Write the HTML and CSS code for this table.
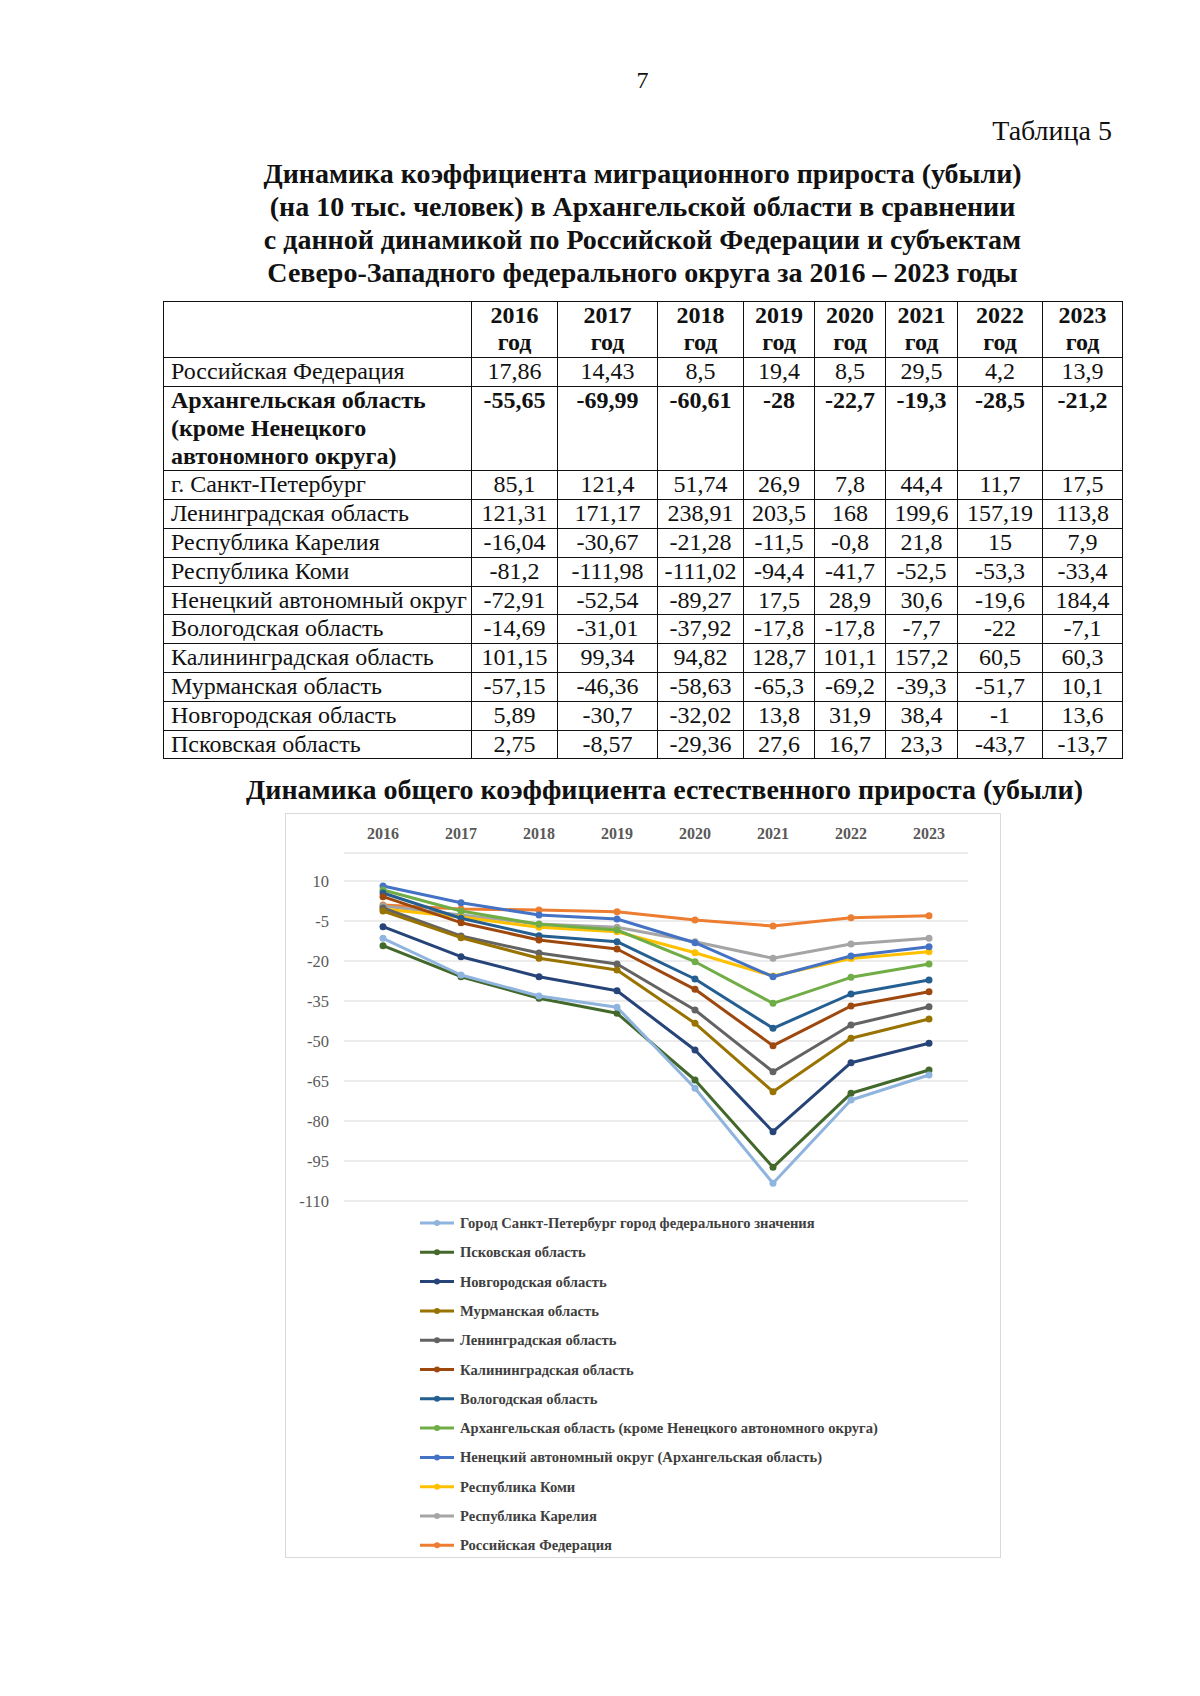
FILE: index.html
```html
<!DOCTYPE html>
<html>
<head>
<meta charset="UTF-8">
<title>Таблица 5</title>
<link rel="stylesheet" href="styles.css">
</head>
<body>
<div class="page">
	<div class="page_num">7</div>
	<div class="table_num">Таблица 5</div>
	<h1 class="title">
		Динамика коэффициента миграционного прироста (убыли)<br/>
		(на 10 тыс. человек) в Архангельской области в сравнении<br/>
		с данной динамикой по Российской Федерации и субъектам<br/>
		Северо-Западного федерального округа за 2016 – 2023 годы
	</h1>

	<table class="data">
		<colgroup>
			<col style="width:308px"><col style="width:86px"><col style="width:100px"><col style="width:86px"><col style="width:71px"><col style="width:71px"><col style="width:72px"><col style="width:85px"><col style="width:80px">
		</colgroup>
		<tr class="head">
			<td></td>
			<td>2016<br/>год</td><td>2017<br/>год</td><td>2018<br/>год</td><td>2019<br/>год</td><td>2020<br/>год</td><td>2021<br/>год</td><td>2022<br/>год</td><td>2023<br/>год</td>
		</tr>
		<tr><td class="name">Российская Федерация</td><td>17,86</td><td>14,43</td><td>8,5</td><td>19,4</td><td>8,5</td><td>29,5</td><td>4,2</td><td>13,9</td></tr>
		<tr class="bold"><td class="name">Архангельская область<br/>(кроме Ненецкого<br/>автономного округа)</td><td>-55,65</td><td>-69,99</td><td>-60,61</td><td>-28</td><td>-22,7</td><td>-19,3</td><td>-28,5</td><td>-21,2</td></tr>
		<tr><td class="name">г. Санкт-Петербург</td><td>85,1</td><td>121,4</td><td>51,74</td><td>26,9</td><td>7,8</td><td>44,4</td><td>11,7</td><td>17,5</td></tr>
		<tr><td class="name">Ленинградская область</td><td>121,31</td><td>171,17</td><td>238,91</td><td>203,5</td><td>168</td><td>199,6</td><td>157,19</td><td>113,8</td></tr>
		<tr><td class="name">Республика Карелия</td><td>-16,04</td><td>-30,67</td><td>-21,28</td><td>-11,5</td><td>-0,8</td><td>21,8</td><td>15</td><td>7,9</td></tr>
		<tr><td class="name">Республика Коми</td><td>-81,2</td><td>-111,98</td><td>-111,02</td><td>-94,4</td><td>-41,7</td><td>-52,5</td><td>-53,3</td><td>-33,4</td></tr>
		<tr><td class="name">Ненецкий автономный округ</td><td>-72,91</td><td>-52,54</td><td>-89,27</td><td>17,5</td><td>28,9</td><td>30,6</td><td>-19,6</td><td>184,4</td></tr>
		<tr><td class="name">Вологодская область</td><td>-14,69</td><td>-31,01</td><td>-37,92</td><td>-17,8</td><td>-17,8</td><td>-7,7</td><td>-22</td><td>-7,1</td></tr>
		<tr><td class="name">Калининградская область</td><td>101,15</td><td>99,34</td><td>94,82</td><td>128,7</td><td>101,1</td><td>157,2</td><td>60,5</td><td>60,3</td></tr>
		<tr><td class="name">Мурманская область</td><td>-57,15</td><td>-46,36</td><td>-58,63</td><td>-65,3</td><td>-69,2</td><td>-39,3</td><td>-51,7</td><td>10,1</td></tr>
		<tr><td class="name">Новгородская область</td><td>5,89</td><td>-30,7</td><td>-32,02</td><td>13,8</td><td>31,9</td><td>38,4</td><td>-1</td><td>13,6</td></tr>
		<tr><td class="name">Псковская область</td><td>2,75</td><td>-8,57</td><td>-29,36</td><td>27,6</td><td>16,7</td><td>23,3</td><td>-43,7</td><td>-13,7</td></tr>
	</table>

	<h2 class="chart_title">Динамика общего коэффициента естественного прироста (убыли)</h2>

	<div class="chart">
		<svg width="712" height="741" viewBox="286 814 712 741">
			<defs>
				<marker id="m_rf" viewBox="0 0 8 8" refX="4" refY="4" markerWidth="8" markerHeight="8" markerUnits="userSpaceOnUse"><circle cx="4" cy="4" r="3.5" fill="#ed7d31"/></marker>
				<marker id="m_kar" viewBox="0 0 8 8" refX="4" refY="4" markerWidth="8" markerHeight="8" markerUnits="userSpaceOnUse"><circle cx="4" cy="4" r="3.5" fill="#a5a5a5"/></marker>
				<marker id="m_komi" viewBox="0 0 8 8" refX="4" refY="4" markerWidth="8" markerHeight="8" markerUnits="userSpaceOnUse"><circle cx="4" cy="4" r="3.5" fill="#ffc000"/></marker>
				<marker id="m_nen" viewBox="0 0 8 8" refX="4" refY="4" markerWidth="8" markerHeight="8" markerUnits="userSpaceOnUse"><circle cx="4" cy="4" r="3.5" fill="#4472c4"/></marker>
				<marker id="m_arh" viewBox="0 0 8 8" refX="4" refY="4" markerWidth="8" markerHeight="8" markerUnits="userSpaceOnUse"><circle cx="4" cy="4" r="3.5" fill="#70ad47"/></marker>
				<marker id="m_vol" viewBox="0 0 8 8" refX="4" refY="4" markerWidth="8" markerHeight="8" markerUnits="userSpaceOnUse"><circle cx="4" cy="4" r="3.5" fill="#255e91"/></marker>
				<marker id="m_kal" viewBox="0 0 8 8" refX="4" refY="4" markerWidth="8" markerHeight="8" markerUnits="userSpaceOnUse"><circle cx="4" cy="4" r="3.5" fill="#9e480e"/></marker>
				<marker id="m_len" viewBox="0 0 8 8" refX="4" refY="4" markerWidth="8" markerHeight="8" markerUnits="userSpaceOnUse"><circle cx="4" cy="4" r="3.5" fill="#636363"/></marker>
				<marker id="m_mur" viewBox="0 0 8 8" refX="4" refY="4" markerWidth="8" markerHeight="8" markerUnits="userSpaceOnUse"><circle cx="4" cy="4" r="3.5" fill="#997300"/></marker>
				<marker id="m_nov" viewBox="0 0 8 8" refX="4" refY="4" markerWidth="8" markerHeight="8" markerUnits="userSpaceOnUse"><circle cx="4" cy="4" r="3.5" fill="#264478"/></marker>
				<marker id="m_psk" viewBox="0 0 8 8" refX="4" refY="4" markerWidth="8" markerHeight="8" markerUnits="userSpaceOnUse"><circle cx="4" cy="4" r="3.5" fill="#43682b"/></marker>
				<marker id="m_spb" viewBox="0 0 8 8" refX="4" refY="4" markerWidth="8" markerHeight="8" markerUnits="userSpaceOnUse"><circle cx="4" cy="4" r="3.5" fill="#8fb4de"/></marker>
			</defs>

			<!-- years on top -->
			<g class="years">
				<text x="383" y="839">2016</text>
				<text x="461" y="839">2017</text>
				<text x="539" y="839">2018</text>
				<text x="617" y="839">2019</text>
				<text x="695" y="839">2020</text>
				<text x="773" y="839">2021</text>
				<text x="851" y="839">2022</text>
				<text x="929" y="839">2023</text>
			</g>

			<g class="grid">
				<line x1="344" y1="853" x2="968" y2="853"/>
				<line x1="344" y1="881" x2="968" y2="881"/>
				<line x1="344" y1="921" x2="968" y2="921"/>
				<line x1="344" y1="961" x2="968" y2="961"/>
				<line x1="344" y1="1001" x2="968" y2="1001"/>
				<line x1="344" y1="1041" x2="968" y2="1041"/>
				<line x1="344" y1="1081" x2="968" y2="1081"/>
				<line x1="344" y1="1121" x2="968" y2="1121"/>
				<line x1="344" y1="1161" x2="968" y2="1161"/>
				<line x1="344" y1="1201" x2="968" y2="1201"/>
			</g>

			<g class="axis">
				<text x="329" y="887">10</text>
				<text x="329" y="927">-5</text>
				<text x="329" y="967">-20</text>
				<text x="329" y="1007">-35</text>
				<text x="329" y="1047">-50</text>
				<text x="329" y="1087">-65</text>
				<text x="329" y="1127">-80</text>
				<text x="329" y="1167">-95</text>
				<text x="329" y="1207">-110</text>
			</g>

			<g class="series">
				<polyline class="s_rf" marker-start="url(#m_rf)" marker-mid="url(#m_rf)" marker-end="url(#m_rf)" points="383,905 461,909 539,910 617,911.7 695,920 773,926 851,917.7 929,915.7"/>
				<polyline class="s_kar" marker-start="url(#m_kar)" marker-mid="url(#m_kar)" marker-end="url(#m_kar)" points="383,906 461,915 539,924 617,927.3 695,941.7 773,958.3 851,944 929,938.3"/>
				<polyline class="s_komi" marker-start="url(#m_komi)" marker-mid="url(#m_komi)" marker-end="url(#m_komi)" points="383,909 461,917 539,927.3 617,931.7 695,952.7 773,976 851,958.5 929,951.7"/>
				<polyline class="s_nen" marker-start="url(#m_nen)" marker-mid="url(#m_nen)" marker-end="url(#m_nen)" points="383,886 461,902.7 539,915 617,919 695,942.7 773,976.7 851,956 929,946.7"/>
				<polyline class="s_arh" marker-start="url(#m_arh)" marker-mid="url(#m_arh)" marker-end="url(#m_arh)" points="383,890 461,911 539,924.3 617,930 695,961.7 773,1003.3 851,977.3 929,964"/>
				<polyline class="s_vol" marker-start="url(#m_vol)" marker-mid="url(#m_vol)" marker-end="url(#m_vol)" points="383,893 461,918.3 539,935.7 617,941.7 695,979 773,1028.3 851,994 929,980"/>
				<polyline class="s_kal" marker-start="url(#m_kal)" marker-mid="url(#m_kal)" marker-end="url(#m_kal)" points="383,896.7 461,922.7 539,940 617,949 695,989.3 773,1045.7 851,1006 929,991.7"/>
				<polyline class="s_len" marker-start="url(#m_len)" marker-mid="url(#m_len)" marker-end="url(#m_len)" points="383,908 461,936 539,953 617,964 695,1010 773,1071.7 851,1025 929,1006.7"/>
				<polyline class="s_mur" marker-start="url(#m_mur)" marker-mid="url(#m_mur)" marker-end="url(#m_mur)" points="383,911 461,937.7 539,958.3 617,970 695,1023.3 773,1091.7 851,1038.3 929,1019"/>
				<polyline class="s_nov" marker-start="url(#m_nov)" marker-mid="url(#m_nov)" marker-end="url(#m_nov)" points="383,926.7 461,956.7 539,976.7 617,990.7 695,1050 773,1131.7 851,1062.7 929,1043.3"/>
				<polyline class="s_psk" marker-start="url(#m_psk)" marker-mid="url(#m_psk)" marker-end="url(#m_psk)" points="383,945.7 461,976.7 539,998.3 617,1013.3 695,1080 773,1167.3 851,1093.3 929,1070"/>
				<polyline class="s_spb" marker-start="url(#m_spb)" marker-mid="url(#m_spb)" marker-end="url(#m_spb)" points="383,938.3 461,975 539,996 617,1007.3 695,1088.3 773,1183.3 851,1100 929,1075"/>
			</g>

			<!-- legend -->
			<g class="legend">
				<line class="s_spb" x1="420" y1="1223" x2="454" y2="1223"/><circle cx="437" cy="1223" r="3" fill="#8fb4de"/>
				<text x="460" y="1228">Город Санкт-Петербург город федерального значения</text>
				<line class="s_psk" x1="420" y1="1252.3" x2="454" y2="1252.3"/><circle cx="437" cy="1252.3" r="3" fill="#43682b"/>
				<text x="460" y="1257.3">Псковская область</text>
				<line class="s_nov" x1="420" y1="1281.6" x2="454" y2="1281.6"/><circle cx="437" cy="1281.6" r="3" fill="#264478"/>
				<text x="460" y="1286.6">Новгородская область</text>
				<line class="s_mur" x1="420" y1="1310.9" x2="454" y2="1310.9"/><circle cx="437" cy="1310.9" r="3" fill="#997300"/>
				<text x="460" y="1315.9">Мурманская область</text>
				<line class="s_len" x1="420" y1="1340.2" x2="454" y2="1340.2"/><circle cx="437" cy="1340.2" r="3" fill="#636363"/>
				<text x="460" y="1345.2">Ленинградская область</text>
				<line class="s_kal" x1="420" y1="1369.5" x2="454" y2="1369.5"/><circle cx="437" cy="1369.5" r="3" fill="#9e480e"/>
				<text x="460" y="1374.5">Калининградская область</text>
				<line class="s_vol" x1="420" y1="1398.8" x2="454" y2="1398.8"/><circle cx="437" cy="1398.8" r="3" fill="#255e91"/>
				<text x="460" y="1403.8">Вологодская область</text>
				<line class="s_arh" x1="420" y1="1428.1" x2="454" y2="1428.1"/><circle cx="437" cy="1428.1" r="3" fill="#70ad47"/>
				<text x="460" y="1433.1">Архангельская область (кроме Ненецкого автономного округа)</text>
				<line class="s_nen" x1="420" y1="1457.4" x2="454" y2="1457.4"/><circle cx="437" cy="1457.4" r="3" fill="#4472c4"/>
				<text x="460" y="1462.4">Ненецкий автономный округ (Архангельская область)</text>
				<line class="s_komi" x1="420" y1="1486.7" x2="454" y2="1486.7"/><circle cx="437" cy="1486.7" r="3" fill="#ffc000"/>
				<text x="460" y="1491.7">Республика Коми</text>
				<line class="s_kar" x1="420" y1="1516" x2="454" y2="1516"/><circle cx="437" cy="1516" r="3" fill="#a5a5a5"/>
				<text x="460" y="1521">Республика Карелия</text>
				<line class="s_rf" x1="420" y1="1545.3" x2="454" y2="1545.3"/><circle cx="437" cy="1545.3" r="3" fill="#ed7d31"/>
				<text x="460" y="1550.3">Российская Федерация</text>
			</g>
		</svg>
	</div>
</div>
</body>
</html>
```

FILE: styles.css
```css
*{
	margin:0;
	padding:0;
}
body{
	background:#fff;
	color:#111;
	font-family:"Liberation Serif", "Times New Roman", serif;
}
.page{
	width:959px;
	padding-left:163px;
	padding-top:67px;
	height:1629px;
}
.page_num{
	text-align:center;
	font-size:24px;
	line-height:27.6px;
}
.table_num{
	text-align:right;
	padding-right:10px;
	margin-top:19px;
	font-size:28px;
	line-height:33px;
}
.title{
	margin-top:10px;
	text-align:center;
	font-size:28px;
	line-height:33px;
	font-weight:bold;
}
.data{
	margin-top:12px;
	width:959px;
	table-layout:fixed;
	border-collapse:collapse;
	font-size:24px;
	line-height:27.8px;
}
.data td{
	border:1px solid #111;
	text-align:center;
	vertical-align:top;
	padding:0;
	white-space:nowrap;
}
.data td.name{
	text-align:left;
	padding-left:7px;
}
.data .head td{
	font-weight:bold;
}
.data .bold td{
	font-weight:bold;
}
.chart_title{
	margin-top:14px;
	padding-left:44px;
	text-align:center;
	font-size:28px;
	line-height:33px;
	font-weight:bold;
}
.chart{
	margin-top:7px;
	margin-left:122px;
	width:714px;
	height:743px;
	border:1px solid #d9d9d9;
}
.chart svg{
	display:block;
}
.years text{
	font-family:"Liberation Serif", "Times New Roman", serif;
	font-size:16px;
	font-weight:bold;
	fill:#595959;
	text-anchor:middle;
}
.axis text{
	font-family:"Liberation Serif", "Times New Roman", serif;
	font-size:16.5px;
	fill:#595959;
	text-anchor:end;
}
.grid line{
	stroke:#d9d9d9;
	stroke-width:1;
}
.series polyline{
	fill:none;
	stroke-width:3;
	stroke-linejoin:round;
	stroke-linecap:round;
}
.legend line{
	stroke-width:3;
}
.legend text{
	font-family:"Liberation Serif", "Times New Roman", serif;
	font-size:14.6px;
	font-weight:bold;
	fill:#404040;
}
.s_rf{ stroke:#ed7d31; }
.s_kar{ stroke:#a5a5a5; }
.s_komi{ stroke:#ffc000; }
.s_nen{ stroke:#4472c4; }
.s_arh{ stroke:#70ad47; }
.s_vol{ stroke:#255e91; }
.s_kal{ stroke:#9e480e; }
.s_len{ stroke:#636363; }
.s_mur{ stroke:#997300; }
.s_nov{ stroke:#264478; }
.s_psk{ stroke:#43682b; }
.s_spb{ stroke:#8fb4de; }
```
